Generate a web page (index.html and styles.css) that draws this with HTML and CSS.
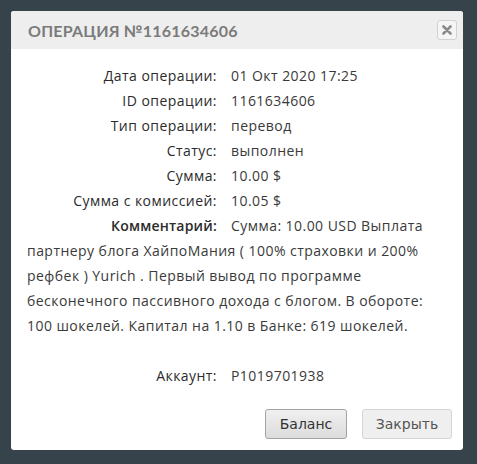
FILE: index.html
```html
<!DOCTYPE html>
<html lang="ru">
<head>
  <meta charset="UTF-8">
  <title>Операция №1161634606</title>
  <link rel="stylesheet" href="styles.css">
</head>
<body>
  <div class="dialog">
    <div class="dialog-header">
      <h2>Операция №1161634606</h2>
      <button class="close-btn" title="Закрыть">
        <svg width="10" height="10" viewBox="0 0 10 10">
          <path d="M1.5 1.5 L8.5 8.5 M8.5 1.5 L1.5 8.5" stroke="#8a8a8a" stroke-width="2.6" stroke-linecap="round"/>
        </svg>
      </button>
    </div>

    <div class="dialog-body">
      <div class="row"><span class="label">Дата операции:</span><span class="value">01 Окт 2020 17:25</span></div>
      <div class="row"><span class="label">ID операции:</span><span class="value">1161634606</span></div>
      <div class="row"><span class="label">Тип операции:</span><span class="value">перевод</span></div>
      <div class="row"><span class="label">Статус:</span><span class="value">выполнен</span></div>
      <div class="row"><span class="label">Сумма:</span><span class="value">10.00 $</span></div>
      <div class="row"><span class="label">Сумма с комиссией:</span><span class="value">10.05 $</span></div>
      <div class="row"><span class="label strong">Комментарий:</span><span class="value">Сумма: 10.00 USD Выплата партнеру блога ХайпоМания ( 100% страховки и 200% рефбек ) Yurich . Первый вывод по программе бесконечного пассивного дохода с блогом. В обороте: 100 шокелей. Капитал на 1.10 в Банке: 619 шокелей.</span></div>
      <div class="row spacer"></div>
      <div class="row"><span class="label">Аккаунт:</span><span class="value">P1019701938</span></div>
    </div>

    <div class="dialog-footer">
      <button class="btn btn-main">Баланс</button>
      <button class="btn btn-light">Закрыть</button>
    </div>
  </div>
</body>
</html>
```

FILE: styles.css
```css
* {
  box-sizing: border-box;
}
body {
  margin: 0;
  padding: 11px;
  background: #37434b;
  font-family: 'Open Sans', sans-serif;
}
.dialog {
  width: 452px;
  height: 439px;
  background: #fff;
  border-radius: 3px;
  display: flex;
  flex-direction: column;
  overflow: hidden;
}
.dialog-header {
  height: 38px;
  background: #eeeeee;
  display: flex;
  align-items: center;
  justify-content: space-between;
  padding: 0 6px 0 17px;
}
.dialog-header h2 {
  margin: 0;
  font-family: 'Lato', sans-serif;
  font-size: 16px;
  font-weight: 700;
  text-transform: uppercase;
  letter-spacing: 0.2px;
  color: #7b7b7b;
}
.close-btn {
  width: 20px;
  height: 20px;
  padding: 0;
  border: 1px solid #d2d2d2;
  border-radius: 3px;
  background: #f5f5f5;
  display: flex;
  align-items: center;
  justify-content: center;
  cursor: pointer;
}
.dialog-body {
  flex: 1;
  padding: 14px 14px 0 16px;
  font-size: 14px;
  line-height: 25px;
  letter-spacing: 0.45px;
  color: #3a3a3a;
}
.row {
  margin: 0;
}
.label {
  display: inline-block;
  width: 190px;
  margin-right: 14px;
  text-align: right;
  color: #2b2b2b;
}
.label.strong {
  font-weight: 600;
  letter-spacing: 0.2px;
}
.spacer {
  height: 25px;
}
.dialog-footer {
  display: flex;
  justify-content: flex-end;
  gap: 15px;
  padding: 0 11px 11px 0;
}
.btn {
  height: 30px;
  padding: 0 12px;
  border-radius: 3px;
  font-family: 'DejaVu Sans', sans-serif;
  font-size: 14px;
  cursor: pointer;
}
.btn-main {
  width: 82px;
  border: 1px solid #a3a3a3;
  background: linear-gradient(#f0f0f0, #dcdcdc);
  color: #333;
}
.btn-light {
  width: 90px;
  border: 1px solid #d6d6d6;
  background: #efefef;
  color: #555;
}
```
